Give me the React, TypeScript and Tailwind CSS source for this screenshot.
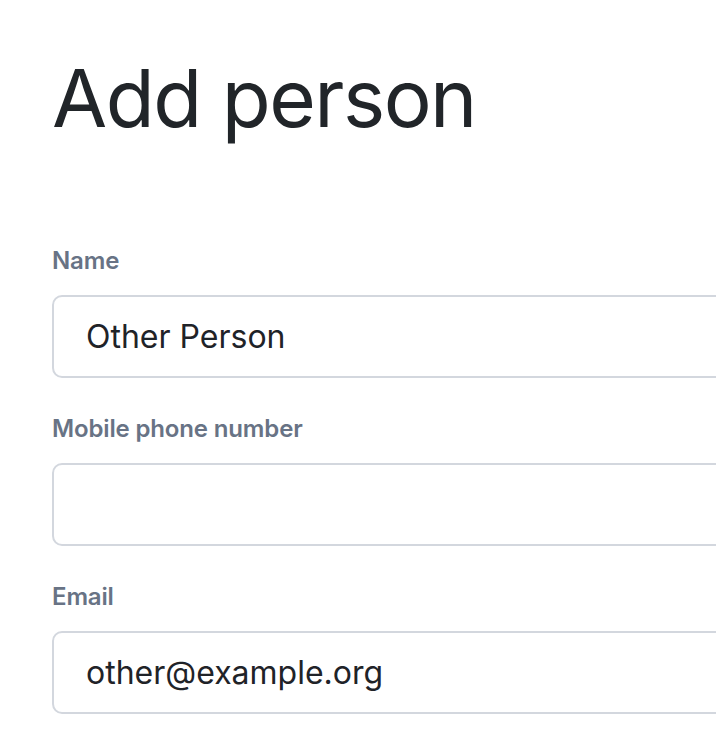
import React from "react";

function Field({ label, value }: { label: string; value: string }) {
  return (
    <div className="flex flex-col">
      <label className="text-[24px] leading-[36px] font-semibold tracking-[-0.15px] text-[#687385] mb-[16px]">{label}</label>
      <input
        readOnly
        value={value}
        className="h-[83px] w-[760px] rounded-[10px] border-2 border-[#d3d7de] bg-white pl-[32px] text-[32px] text-[#1f2328] outline-none"
        style={{ fontFamily: "Inter, sans-serif" }}
      />
    </div>
  );
}

export default function App() {
  return (
    <div className="min-h-[742px] w-[716px] overflow-hidden bg-white pl-[52px] pt-[50px]" style={{ fontFamily: "Inter, sans-serif" }}>
      <h1 className="text-[80px] leading-[96px] font-normal tracking-[-1.5px] text-[#212529] mb-[97px]">Add person</h1>
      <div className="flex flex-col gap-[33px]">
        <Field label="Name" value="Other Person" />
        <Field label="Mobile phone number" value="" />
        <Field label="Email" value="other@example.org" />
      </div>
    </div>
  );
}
